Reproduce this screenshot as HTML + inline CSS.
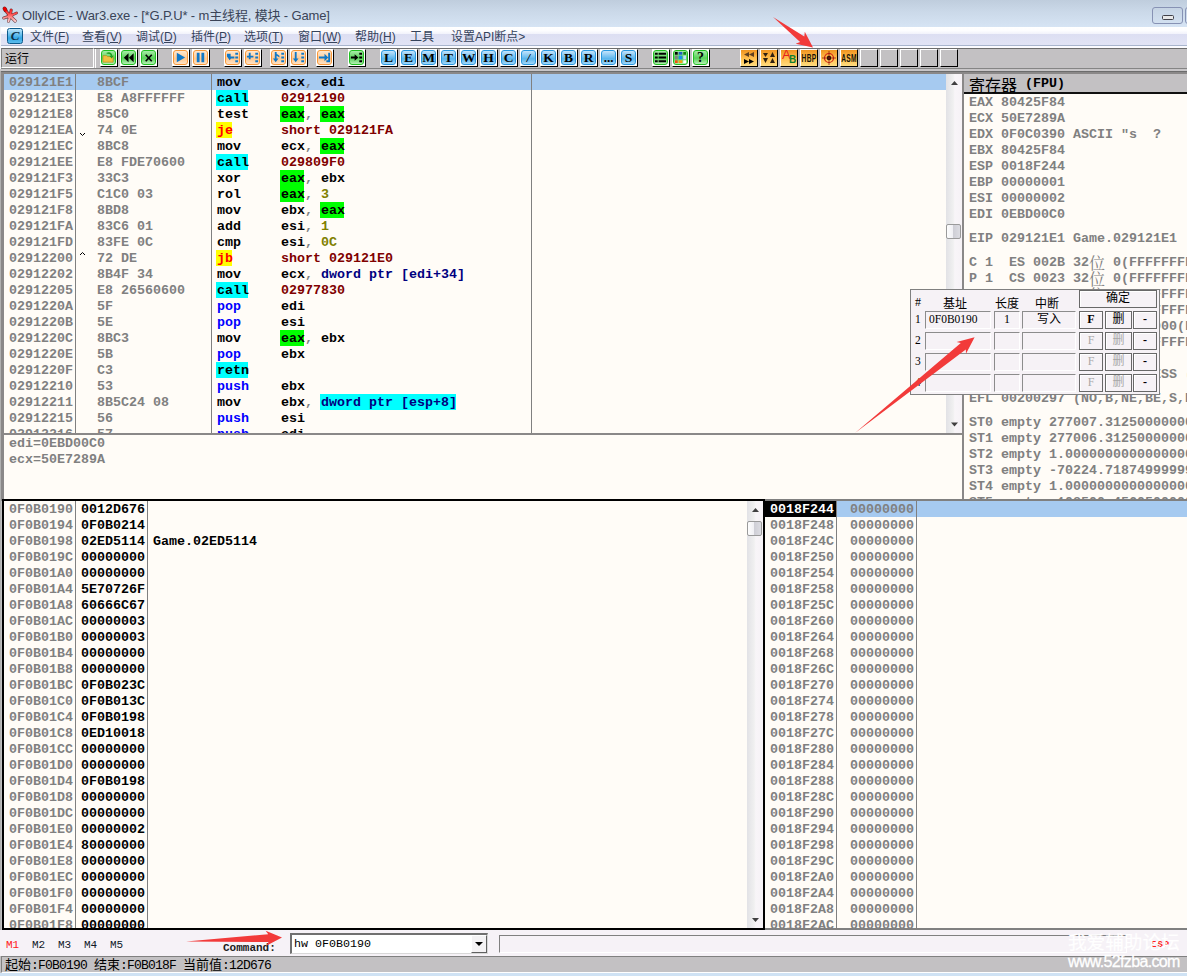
<!DOCTYPE html><html><head><meta charset="utf-8"><title>OllyICE - War3.exe</title><style>
*{margin:0;padding:0;box-sizing:border-box}
html,body{width:1187px;height:976px;overflow:hidden;background:#c0c0c0}
body{position:relative;font-family:"Liberation Sans","Noto Sans CJK SC",sans-serif}
.a{position:absolute}
.m{font-family:"Liberation Mono","Noto Sans CJK SC",monospace;font-weight:bold;font-size:13.333px;line-height:16px;white-space:pre;letter-spacing:0}
.r{position:absolute;left:0;height:16px;white-space:pre;margin-left:1px}
.r>span,.r{line-height:18px}
.r span{display:inline-block;height:16px;vertical-align:top}
.g{color:#808080}
.k{color:#000}
.cy,.gr,.ye{margin-left:-1px;padding-left:1px}
.cy{background:linear-gradient(#0ff,#0ff) 0 0/calc(100% - 1px) 100% no-repeat;color:#000}
.gr{background:linear-gradient(#0f0,#0f0) 0 0/calc(100% - 1px) 100% no-repeat;color:#000}
.ye{background:linear-gradient(#ff0,#ff0) 0 0/calc(100% - 1px) 100% no-repeat;color:#ff0000}
.bl{color:#0000ff}
.dr{color:#800000}
.nv{color:#000080}
.ol{color:#808000}
.cj{font-family:"Noto Sans CJK SC",sans-serif;font-weight:normal;font-size:16px;color:#000}
.pane{position:absolute;background:#fffcf7;overflow:hidden}
.vl{position:absolute;width:1px;background:#808080;top:0;bottom:0}
.tb{position:absolute;top:49px;width:18px;height:18px;border-top:1px solid #fff;border-left:1px solid #fff;border-right:1px solid #000;border-bottom:1px solid #000;background:#c3c1c3}
.tg,.to,.tl{background:#fff}
.tb i{position:absolute;left:0;top:0;width:15px;height:15px;display:block;border-radius:3px;font-style:normal}
.tg i{border:1px solid #20c020;background:linear-gradient(#a8eca8,#58d058 55%,#b4f0b4)}
.to i{border:1px solid #f89838;background:linear-gradient(#ffe8d0,#ffc890 60%,#ffe4c8)}
.tl i{border:1px solid #2898e0;background:linear-gradient(#c4e4fc,#58b4ec 60%,#a4d8f8);font-family:"Liberation Serif",serif;font-weight:bold;font-size:13.500px;line-height:13px;text-align:center;color:#000}
.tp i{border-radius:0;left:0;top:0;width:16px;height:16px;background:linear-gradient(#f09420,#ffc050 55%,#ffdc80)}
.menu{position:absolute;top:29px;height:16px;font-size:12px;line-height:16px;color:#35435c;white-space:pre;font-family:"Liberation Sans","Noto Sans CJK SC",sans-serif}
.menu u{text-decoration:underline}
.sb{position:absolute;background:linear-gradient(90deg,#e2e2e6,#f0f0f0 45%,#f8f5f8 55%,#f6f2f6)}
.th{position:absolute;left:0;width:15px;border:1px solid #9a9a9a;border-radius:2px;background:linear-gradient(90deg,#fdfdfd,#f0f0f4 45%,#cfcfd6 50%,#dcdce2)}
.dlg{position:absolute;left:910px;top:289px;width:250px;height:106px;background:#f6f2f6;border:1px solid #808080;border-right-color:#808080;font-family:"Liberation Serif","Noto Sans CJK SC",serif;font-size:12px;color:#000}
.in{position:absolute;height:18px;border-top:1px solid #8c8c8c;border-left:1px solid #8c8c8c;border-right:1px solid #fff;border-bottom:1px solid #fff;background:#f6f2f6;font-size:12px;line-height:15px;text-align:center;white-space:pre}
.bt{position:absolute;height:18px;border:1px solid #686868;box-shadow:inset 1px 1px 0 #fff;background:#f6f2f6;font-size:12px;line-height:15px;text-align:center}
.dis{color:#a8a8a8}
.sc{font-family:'Noto Sans CJK SC',sans-serif;font-size:13px;letter-spacing:0}
</style></head><body>
<div class="a" style="left:0;top:0;width:1187px;height:27px;background:linear-gradient(#bfcddd,#cad8e8 40%,#d6e4f4)"></div>
<svg class="a" style="left:1px;top:6px" width="19" height="18" viewBox="1 6 19 18"><defs><linearGradient id="sg" x1="0" y1="7" x2="0" y2="23" gradientUnits="userSpaceOnUse"><stop offset="0" stop-color="#f00000"/><stop offset=".45" stop-color="#ff5050"/><stop offset="1" stop-color="#fff0f0"/></linearGradient></defs><g fill="none" stroke-linecap="round"><g stroke="#5a1010" stroke-opacity=".75"><path d="M10 16L6 11" stroke-width="3.400"/><ellipse cx="5" cy="9.300" rx="1.500" ry="2.300" transform="rotate(-28 5 9.300)" fill="#5a1010" stroke-width="1.200"/><path d="M10 16L11.200 10" stroke-width="3.200"/><path d="M10 16L16.500 13" stroke-width="3"/><path d="M10 16L3.700 18" stroke-width="3"/><path d="M10 16L8.500 21.300" stroke-width="3"/><path d="M10 16L15.200 21" stroke-width="3.200"/><circle cx="10" cy="16" r="2.600" stroke-width="1.200"/></g><g stroke="url(#sg)"><path d="M10 16L6 11" stroke-width="2"/><ellipse cx="5" cy="9.300" rx="1.500" ry="2.300" transform="rotate(-28 5 9.300)" fill="#f00000" stroke="#f00000" stroke-width=".2"/><path d="M10 16L11.200 10" stroke-width="2"/><path d="M10 16L16.500 13" stroke-width="1.800"/><path d="M10 16L3.700 18" stroke-width="1.800"/><path d="M10 16L8.500 21.300" stroke-width="1.800"/><path d="M10 16L15.200 21" stroke-width="2"/><circle cx="10" cy="16" r="2.400" fill="url(#sg)" stroke-width=".4"/></g></g></svg>
<div class="a" style="left:22px;top:7px;font-size:13px;line-height:18px;color:#3a4458;white-space:pre;letter-spacing:-0.15px;font-family:'Liberation Sans','Noto Sans CJK SC',sans-serif">OllyICE - War3.exe - [*G.P.U* - m主线程, 模块 - Game]</div>
<div class="a" style="left:1152px;top:7px;width:31px;height:17px;border:1px solid #8792b4;border-radius:3px;background:linear-gradient(#c6d4e4,#d2e0f0)"></div>
<div class="a" style="left:1162px;top:15px;width:12px;height:5px;border:1px solid #404048;border-radius:1.5px;background:#e8e8e8"></div>
<div class="a" style="left:1185px;top:7px;width:10px;height:17px;border:1px solid #8792b4;border-radius:3px"></div>
<div class="a" style="left:0;top:27px;width:1187px;height:7px;background:linear-gradient(#fff,#fdfdff 50%,#f1f2fb)"></div>
<div class="a" style="left:0;top:34px;width:1187px;height:11px;background:linear-gradient(#dcdef2,#e2e4f5)"></div>
<div class="a" style="left:0;top:45px;width:1187px;height:1px;background:#a9b5cd"></div>
<div class="a" style="left:0;top:46px;width:1187px;height:2px;background:#fbfbff"></div>
<div class="a" style="left:7px;top:28px;width:16px;height:16px;border:1px solid #0c5a8c;border-radius:2.500px;background:linear-gradient(#bfe6fa,#34a8e6 65%,#5cbcec);font-family:'Liberation Serif',serif;font-weight:bold;font-style:italic;font-size:13px;line-height:14px;text-align:center;color:#0c3048">C</div>
<div class="menu" style="left:30px">文件(<u>F</u>)</div>
<div class="menu" style="left:82px">查看(<u>V</u>)</div>
<div class="menu" style="left:136px">调试(<u>D</u>)</div>
<div class="menu" style="left:191px">插件(<u>P</u>)</div>
<div class="menu" style="left:244px">选项(<u>T</u>)</div>
<div class="menu" style="left:298px">窗口(<u>W</u>)</div>
<div class="menu" style="left:355px">帮助(<u>H</u>)</div>
<div class="menu" style="left:410px">工具</div>
<div class="menu" style="left:451px">设置API断点></div>
<div class="a" style="left:0;top:48px;width:1187px;height:1px;background:#6c6c6c"></div>
<div class="a" style="left:0;top:49px;width:1187px;height:19px;background:#c3c1c3"></div>
<div class="a" style="left:0;top:68px;width:1187px;height:1px;background:#858585"></div>
<div class="a" style="left:0;top:69px;width:1187px;height:2px;background:#c8c6c8"></div>
<div class="a" style="left:0;top:27px;width:1px;height:42px;background:#f4f4f8"></div>
<div class="a" style="left:1px;top:48px;width:93px;height:20px;border-top:1px solid #6c6c6c;border-left:1px solid #808080;border-right:1px solid #fff;border-bottom:1px solid #fff;background:#c3c1c3"></div>
<div class="a" style="left:5px;top:50px;font-size:12px;line-height:16px;color:#000;font-family:'Noto Sans CJK SC',sans-serif">运行</div>
<div class="a" style="left:95px;top:49px;width:1px;height:19px;background:#fff"></div>
<div class="tb tg" style="left:100px"><i><svg width="13" height="13" viewBox="0 0 14 14" style="position:absolute;left:0;top:0"><path d="M1 5h4l1 1h6v6H1z" fill="#f0c040" stroke="#b08010" stroke-width=".6"/><path d="M5 2c3-1.5 6 0 6 3l1.6-.2L10.5 8 8 5.300l1.500-.1C9.300 3.500 7.500 2.400 5 3z" fill="#20a020"/></svg></i></div>
<div class="tb tg" style="left:120px"><i><svg width="13" height="13" viewBox="0 0 14 14" style="position:absolute;left:0;top:0"><path d="M7 2.500v9.500L2 7.200zM12.500 2.500v9.500L7.500 7.200z" fill="#000"/></svg></i></div>
<div class="tb tg" style="left:140px"><i><svg width="13" height="13" viewBox="0 0 14 14" style="position:absolute;left:0;top:0"><path d="M4 4l6.500 7M10.500 4l-6.500 7" stroke="#000" stroke-width="1.800"/></svg></i></div>
<div class="tb to" style="left:172px"><i><svg width="13" height="13" viewBox="0 0 14 14" style="position:absolute;left:0;top:0"><path d="M3 2l9 5-9 5z" fill="#1078c8"/></svg></i></div>
<div class="tb to" style="left:192px"><i><svg width="13" height="13" viewBox="0 0 14 14" style="position:absolute;left:0;top:0"><path d="M3 2h3v10H3zM8 2h3v10H8z" fill="#1078c8"/></svg></i></div>
<div class="tb to" style="left:224px"><i><svg width="13" height="13" viewBox="0 0 14 14" style="position:absolute;left:0;top:0"><path d="M10 2h3v2h-3zM10 6h3v2h-3zM10 10h3v2h-3z" fill="#1078c8"/><path d="M1 3h4v3h2l-3 4-3-4h0z M5 6h4v2H5z" fill="#1078c8"/></svg></i></div>
<div class="tb to" style="left:244px"><i><svg width="13" height="13" viewBox="0 0 14 14" style="position:absolute;left:0;top:0"><path d="M10 2h3v2h-3zM10 6h3v2h-3zM10 10h3v2h-3z" fill="#1078c8"/><path d="M3 2h2v3h3v2H5v0H3V7H1V5h2z M3 7h2v2H3z" fill="#1078c8"/></svg></i></div>
<div class="tb to" style="left:270px"><i><svg width="13" height="13" viewBox="0 0 14 14" style="position:absolute;left:0;top:0"><path d="M10 2h3v2h-3zM10 6h3v2h-3zM10 10h3v2h-3z" fill="#1078c8"/><path d="M3 1h2v7h2l-3 4-3-4h2z M5 3l3 2v2L5 5z" fill="#1078c8"/></svg></i></div>
<div class="tb to" style="left:290px"><i><svg width="13" height="13" viewBox="0 0 14 14" style="position:absolute;left:0;top:0"><path d="M10 2h3v2h-3zM10 6h3v2h-3zM10 10h3v2h-3z" fill="#1078c8"/><path d="M3 1h2v7h2l-3 4-3-4h2z" fill="#1078c8"/></svg></i></div>
<div class="tb to" style="left:316px"><i><svg width="13" height="13" viewBox="0 0 14 14" style="position:absolute;left:0;top:0"><path d="M1 6h6V3l4 4-4 4V8H1z M11 2h2v10H9v-2h2z" fill="#1078c8"/></svg></i></div>
<div class="tb tg" style="left:348px"><i><svg width="13" height="13" viewBox="0 0 14 14" style="position:absolute;left:0;top:0"><path d="M10 2h3v2h-3zM10 6h3v2h-3zM10 10h3v2h-3z" fill="#000"/><path d="M1 6h4V3.500l4 3.500-4 3.500V8H1z" fill="#000"/></svg></i></div>
<div class="tb tl" style="left:380px"><i>L</i></div>
<div class="tb tl" style="left:400px"><i>E</i></div>
<div class="tb tl" style="left:420px"><i>M</i></div>
<div class="tb tl" style="left:440px"><i>T</i></div>
<div class="tb tl" style="left:460px"><i>W</i></div>
<div class="tb tl" style="left:480px"><i>H</i></div>
<div class="tb tl" style="left:500px"><i>C</i></div>
<div class="tb tl" style="left:520px"><i><span style="font-size:12px;font-style:italic">/</span></i></div>
<div class="tb tl" style="left:540px"><i>K</i></div>
<div class="tb tl" style="left:560px"><i>B</i></div>
<div class="tb tl" style="left:580px"><i>R</i></div>
<div class="tb tl" style="left:600px"><i><span style="font-size:13px;letter-spacing:0;position:relative;top:0px">...</span></i></div>
<div class="tb tl" style="left:620px"><i>S</i></div>
<div class="tb tg" style="left:652px"><i><svg width="13" height="13" viewBox="0 0 14 14" style="position:absolute;left:0;top:0"><path d="M1 2h3v2H1zM1 6h3v2H1zM1 10h3v2H1zM5 2h8v2H5zM5 6h8v2H5zM5 10h8v2H5z" fill="#000"/></svg></i></div>
<div class="tb tg" style="left:672px"><i><svg width="13" height="13" viewBox="0 0 14 14" style="position:absolute;left:0;top:0"><path d="M1 1h3v3H1z" fill="#000"/><path d="M5 1h4v3H5z" fill="#2060c0"/><path d="M10 1h3v3h-3z" fill="#108010"/><path d="M1 5h3v4H1z" fill="#808080"/><path d="M5 5h4v4H5z" fill="#1890e8"/><path d="M10 5h3v4h-3z" fill="#c0e0ff"/><path d="M1 10h3v3H1z" fill="#f05010"/><path d="M5 10h4v3H5z" fill="#f0a010"/><path d="M10 10h3v3h-3z" fill="#fff"/></svg></i></div>
<div class="tb tg" style="left:692px"><i><span style="font-family:'Liberation Serif',serif;font-weight:bold;font-size:14px;line-height:14px;display:block;text-align:center;color:#000">?</span></i></div>
<div class="tb tp" style="left:740px"><i><svg width="14" height="14" viewBox="0 0 14 14" style="position:absolute;left:1px;top:1px"><path d="M7 1v5L2 3.500zM12 1v5L7 3.500z" fill="#604020"/><path d="M2 8v5l5-2.500zM7 8v5l5-2.500z" fill="#000"/></svg></i></div>
<div class="tb tp" style="left:760px"><i><svg width="14" height="14" viewBox="0 0 14 14" style="position:absolute;left:1px;top:1px"><path d="M1 2h5L3.500 6zM1 7h5l-2.500 5z" fill="#302010"/><path d="M8 6h5L10.500 1zM8 12h5l-2.500-5z" fill="#302010"/></svg></i></div>
<div class="tb tp" style="left:780px"><i><span style="position:absolute;left:1px;top:-2px;font:13px/14px 'Liberation Sans',sans-serif;color:#e82020">A</span><span style="position:absolute;left:8px;top:4px;font:bold 10px/12px 'Liberation Sans',sans-serif;color:#108030">B</span></i></div>
<div class="tb tp" style="left:800px"><i><span style="position:absolute;left:-6px;top:2px;width:28px;text-align:center;font:bold 11px/12px 'Liberation Sans',sans-serif;color:#1a1408;letter-spacing:0.5px;transform:scaleX(.6)">HBP</span></i></div>
<div class="tb tp" style="left:820px"><i><svg width="14" height="14" viewBox="0 0 14 14" style="position:absolute;left:1px;top:1px"><circle cx="7" cy="7" r="4.500" fill="none" stroke="#d02010" stroke-width="1.200"/><circle cx="7" cy="7" r="2.200" fill="#000"/><path d="M7 0v14M0 7h14" stroke="#902010" stroke-width=".8"/></svg></i></div>
<div class="tb tp" style="left:840px"><i><span style="position:absolute;left:-6px;top:2px;width:28px;text-align:center;font:bold 11px/12px 'Liberation Sans',sans-serif;color:#1a1408;letter-spacing:0.5px;transform:scaleX(.6)">ASM</span></i></div>
<div class="tb" style="left:860px"></div>
<div class="tb" style="left:880px"></div>
<div class="tb" style="left:900px"></div>
<div class="tb" style="left:920px"></div>
<div class="tb" style="left:940px"></div>
<div class="a" style="left:0;top:71px;width:1187px;height:430px;background:#8a8888"></div>
<div class="a" style="left:0;top:71px;width:1187px;height:1px;background:#6c6c6c"></div>
<div class="a" style="left:0;top:71px;width:1px;height:859px;background:#b0b0b0"></div>
<div class="pane m" style="left:4px;top:74px;width:942px;height:359px">
<div class="a" style="left:0;top:0;width:942px;height:16px;background:#a6caf0"></div>
<div class="r g" style="left:4px;top:0px">029121E1</div>
<div class="r g" style="left:92px;top:0px">8BCF</div>
<div class="r" style="left:212px;top:0px"><span class="k">mov     ecx</span><span class="g">, </span><span class="k">edi</span></div>
<div class="r g" style="left:4px;top:16px">029121E3</div>
<div class="r g" style="left:92px;top:16px">E8 A8FFFFFF</div>
<div class="r" style="left:212px;top:16px"><span class="cy">call</span><span class="k">    </span><span class="dr">02912190</span></div>
<div class="r g" style="left:4px;top:32px">029121E8</div>
<div class="r g" style="left:92px;top:32px">85C0</div>
<div class="r" style="left:212px;top:32px"><span class="k">test    </span><span class="gr">eax</span><span class="g">, </span><span class="gr">eax</span></div>
<div class="r g" style="left:4px;top:48px">029121EA</div>
<svg class="a" style="left:75px;top:58px" width="8" height="5"><path d="M1 1l2.500 2.500L6 1" fill="none" stroke="#000" stroke-width="1"/></svg>
<div class="r g" style="left:92px;top:48px">74 0E</div>
<div class="r" style="left:212px;top:48px"><span class="ye">je</span><span class="k">      </span><span class="dr">short 029121FA</span></div>
<div class="r g" style="left:4px;top:64px">029121EC</div>
<div class="r g" style="left:92px;top:64px">8BC8</div>
<div class="r" style="left:212px;top:64px"><span class="k">mov     ecx</span><span class="g">, </span><span class="gr">eax</span></div>
<div class="r g" style="left:4px;top:80px">029121EE</div>
<div class="r g" style="left:92px;top:80px">E8 FDE70600</div>
<div class="r" style="left:212px;top:80px"><span class="cy">call</span><span class="k">    </span><span class="dr">029809F0</span></div>
<div class="r g" style="left:4px;top:96px">029121F3</div>
<div class="r g" style="left:92px;top:96px">33C3</div>
<div class="r" style="left:212px;top:96px"><span class="k">xor     </span><span class="gr">eax</span><span class="g">, </span><span class="k">ebx</span></div>
<div class="r g" style="left:4px;top:112px">029121F5</div>
<div class="r g" style="left:92px;top:112px">C1C0 03</div>
<div class="r" style="left:212px;top:112px"><span class="k">rol     </span><span class="gr">eax</span><span class="g">, </span><span class="ol">3</span></div>
<div class="r g" style="left:4px;top:128px">029121F8</div>
<div class="r g" style="left:92px;top:128px">8BD8</div>
<div class="r" style="left:212px;top:128px"><span class="k">mov     ebx</span><span class="g">, </span><span class="gr">eax</span></div>
<div class="r g" style="left:4px;top:144px">029121FA</div>
<div class="r g" style="left:92px;top:144px">83C6 01</div>
<div class="r" style="left:212px;top:144px"><span class="k">add     esi</span><span class="g">, </span><span class="ol">1</span></div>
<div class="r g" style="left:4px;top:160px">029121FD</div>
<div class="r g" style="left:92px;top:160px">83FE 0C</div>
<div class="r" style="left:212px;top:160px"><span class="k">cmp     esi</span><span class="g">, </span><span class="ol">0C</span></div>
<div class="r g" style="left:4px;top:176px">02912200</div>
<svg class="a" style="left:75px;top:177px" width="8" height="5"><path d="M1 4l2.500-2.500L6 4" fill="none" stroke="#000" stroke-width="1"/></svg>
<div class="r g" style="left:92px;top:176px">72 DE</div>
<div class="r" style="left:212px;top:176px"><span class="ye">jb</span><span class="k">      </span><span class="dr">short 029121E0</span></div>
<div class="r g" style="left:4px;top:192px">02912202</div>
<div class="r g" style="left:92px;top:192px">8B4F 34</div>
<div class="r" style="left:212px;top:192px"><span class="k">mov     ecx</span><span class="g">, </span><span class="nv">dword ptr [edi+34]</span></div>
<div class="r g" style="left:4px;top:208px">02912205</div>
<div class="r g" style="left:92px;top:208px">E8 26560600</div>
<div class="r" style="left:212px;top:208px"><span class="cy">call</span><span class="k">    </span><span class="dr">02977830</span></div>
<div class="r g" style="left:4px;top:224px">0291220A</div>
<div class="r g" style="left:92px;top:224px">5F</div>
<div class="r" style="left:212px;top:224px"><span class="bl">pop</span><span class="k">     edi</span></div>
<div class="r g" style="left:4px;top:240px">0291220B</div>
<div class="r g" style="left:92px;top:240px">5E</div>
<div class="r" style="left:212px;top:240px"><span class="bl">pop</span><span class="k">     esi</span></div>
<div class="r g" style="left:4px;top:256px">0291220C</div>
<div class="r g" style="left:92px;top:256px">8BC3</div>
<div class="r" style="left:212px;top:256px"><span class="k">mov     </span><span class="gr">eax</span><span class="g">, </span><span class="k">ebx</span></div>
<div class="r g" style="left:4px;top:272px">0291220E</div>
<div class="r g" style="left:92px;top:272px">5B</div>
<div class="r" style="left:212px;top:272px"><span class="bl">pop</span><span class="k">     ebx</span></div>
<div class="r g" style="left:4px;top:288px">0291220F</div>
<div class="r g" style="left:92px;top:288px">C3</div>
<div class="r" style="left:212px;top:288px"><span class="cy">retn</span></div>
<div class="r g" style="left:4px;top:304px">02912210</div>
<div class="r g" style="left:92px;top:304px">53</div>
<div class="r" style="left:212px;top:304px"><span class="bl">push</span><span class="k">    ebx</span></div>
<div class="r g" style="left:4px;top:320px">02912211</div>
<div class="r g" style="left:92px;top:320px">8B5C24 08</div>
<div class="r" style="left:212px;top:320px"><span class="k">mov     ebx</span><span class="g">, </span><span class="cy nv">dword ptr [esp+8]</span></div>
<div class="r g" style="left:4px;top:336px">02912215</div>
<div class="r g" style="left:92px;top:336px">56</div>
<div class="r" style="left:212px;top:336px"><span class="bl">push</span><span class="k">    esi</span></div>
<div class="r g" style="left:4px;top:352px">02912216</div>
<div class="r g" style="left:92px;top:352px">57</div>
<div class="r" style="left:212px;top:352px"><span class="bl">push</span><span class="k">    edi</span></div>
<div class="vl" style="left:71px"></div>
<div class="vl" style="left:207px"></div>
<div class="vl" style="left:527px"></div>
</div>
<div class="sb" style="left:946px;top:74px;width:16px;height:359px"></div>
<svg class="a" style="left:946px;top:74px" width="16" height="359"><path d="M5 11l3.500-4 3.500 4z" fill="#404040"/><path d="M5 348.500l3.500 4 3.500-4z" fill="#404040"/></svg>
<div class="th" style="left:946px;top:224px;height:15px"></div>
<div class="pane m g" style="left:4px;top:435px;width:958px;height:64px">
<div class="r" style="left:4px;top:0">edi=0EBD00C0</div><div class="r" style="left:4px;top:16px">ecx=50E7289A</div>
</div>
<div class="pane m g" style="left:964px;top:74px;width:223px;height:425px">
<div class="a" style="left:0;top:0;width:223px;height:18px;background:#c3c1c3"></div>
<div class="a" style="left:0;top:18px;width:223px;height:2px;background:#101010"></div>
<div class="r k" style="left:4px;top:1px"><span class="cj">寄存器</span> (FPU)</div>
<div class="r" style="left:4px;top:20px">EAX 80425F84</div>
<div class="r" style="left:4px;top:36px">ECX 50E7289A</div>
<div class="r" style="left:4px;top:52px">EDX 0F0C0390 ASCII "s  ?</div>
<div class="r" style="left:4px;top:68px">EBX 80425F84</div>
<div class="r" style="left:4px;top:84px">ESP 0018F244</div>
<div class="r" style="left:4px;top:100px">EBP 00000001</div>
<div class="r" style="left:4px;top:116px">ESI 00000002</div>
<div class="r" style="left:4px;top:132px">EDI 0EBD00C0</div>
<div class="r" style="left:4px;top:156px">EIP 029121E1 Game.029121E1</div>
<div class="r" style="left:4px;top:180px">C 1  ES 002B 32<span class="cj" style="color:#808080;font-family:'Noto Serif CJK SC',serif">位</span> 0(FFFFFFFF)</div>
<div class="r" style="left:4px;top:196px">P 1  CS 0023 32<span class="cj" style="color:#808080;font-family:'Noto Serif CJK SC',serif">位</span> 0(FFFFFFFF)</div>
<div class="r" style="left:4px;top:212px">A 0  SS 002B 32<span class="cj" style="color:#808080;font-family:'Noto Serif CJK SC',serif">位</span> 0(FFFFFFFF)</div>
<div class="r" style="left:4px;top:228px">Z 0  DS 002B 32<span class="cj" style="color:#808080;font-family:'Noto Serif CJK SC',serif">位</span> 0(FFFFFFFF)</div>
<div class="r" style="left:4px;top:244px">S 1  FS 0053 32<span class="cj" style="color:#808080;font-family:'Noto Serif CJK SC',serif">位</span> 7EFDD000(FFF)</div>
<div class="r" style="left:4px;top:260px">T 0  GS 002B 32<span class="cj" style="color:#808080;font-family:'Noto Serif CJK SC',serif">位</span> 0(FFFFFFFF)</div>
<div class="r" style="left:4px;top:276px">D 0</div>
<div class="r" style="left:4px;top:292px">O 0  LastErr ERROR_SUCCESS (00000000)</div>
<div class="r" style="left:4px;top:316px">EFL 00200297 (NO,B,NE,BE,S,PE,L,LE)</div>
<div class="r" style="left:4px;top:340px">ST0 empty 277007.31250000000</div>
<div class="r" style="left:4px;top:356px">ST1 empty 277006.31250000000</div>
<div class="r" style="left:4px;top:372px">ST2 empty 1.0000000000000000000</div>
<div class="r" style="left:4px;top:388px">ST3 empty -70224.718749999990</div>
<div class="r" style="left:4px;top:404px">ST4 empty 1.0000000000000000000</div>
<div class="r" style="left:4px;top:420px">ST5 empty -108500.45605000000</div>
</div>
<div class="a" style="left:2px;top:499px;width:763px;height:431px;background:#000"></div>
<div class="pane m" style="left:4px;top:501px;width:743px;height:427px">
<div class="r g" style="left:4px;top:0px">0F0B0190</div>
<div class="r k" style="left:76px;top:0px">0012D676</div>
<div class="r g" style="left:4px;top:16px">0F0B0194</div>
<div class="r k" style="left:76px;top:16px">0F0B0214</div>
<div class="r g" style="left:4px;top:32px">0F0B0198</div>
<div class="r k" style="left:76px;top:32px">02ED5114</div>
<div class="r k" style="left:148px;top:32px">Game.02ED5114</div>
<div class="r g" style="left:4px;top:48px">0F0B019C</div>
<div class="r k" style="left:76px;top:48px">00000000</div>
<div class="r g" style="left:4px;top:64px">0F0B01A0</div>
<div class="r k" style="left:76px;top:64px">00000000</div>
<div class="r g" style="left:4px;top:80px">0F0B01A4</div>
<div class="r k" style="left:76px;top:80px">5E70726F</div>
<div class="r g" style="left:4px;top:96px">0F0B01A8</div>
<div class="r k" style="left:76px;top:96px">60666C67</div>
<div class="r g" style="left:4px;top:112px">0F0B01AC</div>
<div class="r k" style="left:76px;top:112px">00000003</div>
<div class="r g" style="left:4px;top:128px">0F0B01B0</div>
<div class="r k" style="left:76px;top:128px">00000003</div>
<div class="r g" style="left:4px;top:144px">0F0B01B4</div>
<div class="r k" style="left:76px;top:144px">00000000</div>
<div class="r g" style="left:4px;top:160px">0F0B01B8</div>
<div class="r k" style="left:76px;top:160px">00000000</div>
<div class="r g" style="left:4px;top:176px">0F0B01BC</div>
<div class="r k" style="left:76px;top:176px">0F0B023C</div>
<div class="r g" style="left:4px;top:192px">0F0B01C0</div>
<div class="r k" style="left:76px;top:192px">0F0B013C</div>
<div class="r g" style="left:4px;top:208px">0F0B01C4</div>
<div class="r k" style="left:76px;top:208px">0F0B0198</div>
<div class="r g" style="left:4px;top:224px">0F0B01C8</div>
<div class="r k" style="left:76px;top:224px">0ED10018</div>
<div class="r g" style="left:4px;top:240px">0F0B01CC</div>
<div class="r k" style="left:76px;top:240px">00000000</div>
<div class="r g" style="left:4px;top:256px">0F0B01D0</div>
<div class="r k" style="left:76px;top:256px">00000000</div>
<div class="r g" style="left:4px;top:272px">0F0B01D4</div>
<div class="r k" style="left:76px;top:272px">0F0B0198</div>
<div class="r g" style="left:4px;top:288px">0F0B01D8</div>
<div class="r k" style="left:76px;top:288px">00000000</div>
<div class="r g" style="left:4px;top:304px">0F0B01DC</div>
<div class="r k" style="left:76px;top:304px">00000000</div>
<div class="r g" style="left:4px;top:320px">0F0B01E0</div>
<div class="r k" style="left:76px;top:320px">00000002</div>
<div class="r g" style="left:4px;top:336px">0F0B01E4</div>
<div class="r k" style="left:76px;top:336px">80000000</div>
<div class="r g" style="left:4px;top:352px">0F0B01E8</div>
<div class="r k" style="left:76px;top:352px">00000000</div>
<div class="r g" style="left:4px;top:368px">0F0B01EC</div>
<div class="r k" style="left:76px;top:368px">00000000</div>
<div class="r g" style="left:4px;top:384px">0F0B01F0</div>
<div class="r k" style="left:76px;top:384px">00000000</div>
<div class="r g" style="left:4px;top:400px">0F0B01F4</div>
<div class="r k" style="left:76px;top:400px">00000000</div>
<div class="r g" style="left:4px;top:416px">0F0B01F8</div>
<div class="r k" style="left:76px;top:416px">00000000</div>
<div class="vl" style="left:71px"></div>
<div class="vl" style="left:143px"></div>
</div>
<div class="sb" style="left:747px;top:501px;width:16px;height:427px"></div>
<svg class="a" style="left:747px;top:501px" width="16" height="427"><path d="M5 11l3.500-4 3.500 4z" fill="#404040"/><path d="M5 417l3.500 4 3.500-4z" fill="#404040"/></svg>
<div class="th" style="left:747px;top:521px;height:15px"></div>
<div class="a" style="left:765px;top:499px;width:422px;height:432px;background:#808080"></div>
<div class="pane m g" style="left:765px;top:501px;width:422px;height:427px">
<div class="a" style="left:0;top:0;width:422px;height:16px;background:#a6caf0"></div>
<div class="a" style="left:0;top:0;width:71px;height:16px;background:#000"></div>
<div class="r" style="left:4px;top:0px;color:#fff">0018F244</div>
<div class="r" style="left:84px;top:0px">00000000</div>
<div class="r" style="left:4px;top:16px">0018F248</div>
<div class="r" style="left:84px;top:16px">00000000</div>
<div class="r" style="left:4px;top:32px">0018F24C</div>
<div class="r" style="left:84px;top:32px">00000000</div>
<div class="r" style="left:4px;top:48px">0018F250</div>
<div class="r" style="left:84px;top:48px">00000000</div>
<div class="r" style="left:4px;top:64px">0018F254</div>
<div class="r" style="left:84px;top:64px">00000000</div>
<div class="r" style="left:4px;top:80px">0018F258</div>
<div class="r" style="left:84px;top:80px">00000000</div>
<div class="r" style="left:4px;top:96px">0018F25C</div>
<div class="r" style="left:84px;top:96px">00000000</div>
<div class="r" style="left:4px;top:112px">0018F260</div>
<div class="r" style="left:84px;top:112px">00000000</div>
<div class="r" style="left:4px;top:128px">0018F264</div>
<div class="r" style="left:84px;top:128px">00000000</div>
<div class="r" style="left:4px;top:144px">0018F268</div>
<div class="r" style="left:84px;top:144px">00000000</div>
<div class="r" style="left:4px;top:160px">0018F26C</div>
<div class="r" style="left:84px;top:160px">00000000</div>
<div class="r" style="left:4px;top:176px">0018F270</div>
<div class="r" style="left:84px;top:176px">00000000</div>
<div class="r" style="left:4px;top:192px">0018F274</div>
<div class="r" style="left:84px;top:192px">00000000</div>
<div class="r" style="left:4px;top:208px">0018F278</div>
<div class="r" style="left:84px;top:208px">00000000</div>
<div class="r" style="left:4px;top:224px">0018F27C</div>
<div class="r" style="left:84px;top:224px">00000000</div>
<div class="r" style="left:4px;top:240px">0018F280</div>
<div class="r" style="left:84px;top:240px">00000000</div>
<div class="r" style="left:4px;top:256px">0018F284</div>
<div class="r" style="left:84px;top:256px">00000000</div>
<div class="r" style="left:4px;top:272px">0018F288</div>
<div class="r" style="left:84px;top:272px">00000000</div>
<div class="r" style="left:4px;top:288px">0018F28C</div>
<div class="r" style="left:84px;top:288px">00000000</div>
<div class="r" style="left:4px;top:304px">0018F290</div>
<div class="r" style="left:84px;top:304px">00000000</div>
<div class="r" style="left:4px;top:320px">0018F294</div>
<div class="r" style="left:84px;top:320px">00000000</div>
<div class="r" style="left:4px;top:336px">0018F298</div>
<div class="r" style="left:84px;top:336px">00000000</div>
<div class="r" style="left:4px;top:352px">0018F29C</div>
<div class="r" style="left:84px;top:352px">00000000</div>
<div class="r" style="left:4px;top:368px">0018F2A0</div>
<div class="r" style="left:84px;top:368px">00000000</div>
<div class="r" style="left:4px;top:384px">0018F2A4</div>
<div class="r" style="left:84px;top:384px">00000000</div>
<div class="r" style="left:4px;top:400px">0018F2A8</div>
<div class="r" style="left:84px;top:400px">00000000</div>
<div class="r" style="left:4px;top:416px">0018F2AC</div>
<div class="r" style="left:84px;top:416px">00000000</div>
<div class="vl" style="left:71px"></div>
<div class="vl" style="left:151px"></div>
</div>
<div class="a" style="left:0;top:930px;width:1187px;height:26px;background:#f6f2f7"></div>
<div class="a" style="left:6px;top:938px;font-family:'Liberation Mono',monospace;font-size:11px;line-height:14px;white-space:pre;color:#ff2020">M1</div>
<div class="a" style="left:32px;top:938px;font-family:'Liberation Mono',monospace;font-size:11px;line-height:14px;white-space:pre;color:#101828">M2</div>
<div class="a" style="left:58px;top:938px;font-family:'Liberation Mono',monospace;font-size:11px;line-height:14px;white-space:pre;color:#101828">M3</div>
<div class="a" style="left:84px;top:938px;font-family:'Liberation Mono',monospace;font-size:11px;line-height:14px;white-space:pre;color:#101828">M4</div>
<div class="a" style="left:110px;top:938px;font-family:'Liberation Mono',monospace;font-size:11px;line-height:14px;white-space:pre;color:#101828">M5</div>
<div class="a" style="left:223px;top:941px;font-family:'Liberation Mono',monospace;font-size:11px;line-height:14px;white-space:pre;font-weight:bold;color:#202020">Command:</div>
<div class="a" style="left:290px;top:933px;width:198px;height:21px;background:#fff;border-top:2px solid #707070;border-left:2px solid #707070;border-right:1px solid #d8d8d8;border-bottom:1px solid #d8d8d8"></div>
<div class="a" style="left:294px;top:937px;font-family:'Liberation Mono',monospace;font-size:11.67px;line-height:14px;white-space:pre;color:#000">hw 0F0B0190</div>
<div class="a" style="left:471px;top:935px;width:16px;height:18px;background:#f4f2f4;border-right:1px solid #606060;border-bottom:1px solid #606060;border-left:1px solid #fff;border-top:1px solid #fff"></div>
<svg class="a" style="left:471px;top:935px" width="16" height="18"><path d="M4 7h8l-4 4z" fill="#000"/></svg>
<div class="a" style="left:499px;top:935px;width:628px;height:18px;border-top:1px solid #808080;border-left:1px solid #808080;border-right:1px solid #fff;border-bottom:1px solid #fff;background:#f6f2f7"></div>
<div class="a" style="left:1151px;top:939px;font:bold 9px/12px 'Liberation Mono',monospace;color:#ff2020;letter-spacing:1px">ESP</div>
<div class="a" style="left:0;top:956px;width:1187px;height:17px;background:#c3c1c3"></div>
<div class="a" style="left:1px;top:956px;width:1186px;height:17px;border-top:1px solid #808080;border-left:1px solid #808080;border-bottom:1px solid #fff"></div>
<div class="a" style="left:5px;top:956px;font-family:'Liberation Mono',monospace;font-size:13px;letter-spacing:-0.8px;line-height:15px;white-space:pre;color:#000"><span class="sc">起始</span>:F0B0190 <span class="sc">结束</span>:F0B018F <span class="sc">当前值</span>:12D676</div>
<div class="a" style="left:0;top:973px;width:1187px;height:3px;background:#cfe2f4"></div>
<div class="a" style="left:1068px;top:929px;font-family:'Noto Sans CJK SC',sans-serif;font-size:18.6px;line-height:24px;color:#fff;white-space:pre;-webkit-text-stroke:.2px #fff">我爱辅助论坛</div>
<div class="a" style="left:1068px;top:952px;font-family:'Liberation Sans',sans-serif;font-size:16px;letter-spacing:-0.66px;line-height:20px;color:#fff;-webkit-text-stroke:.3px #fff;white-space:pre">www.52fzba.com</div>
<div class="dlg">
<div class="a" style="left:4px;top:5px">#</div><div class="a" style="left:32px;top:4px">基址</div><div class="a" style="left:84px;top:4px">长度</div><div class="a" style="left:124px;top:4px">中断</div>
<div class="bt" style="left:168px;top:0;width:78px">确定</div>
<div class="a" style="left:4px;top:21px;line-height:16px;font-size:11.500px">1</div>
<div class="in" style="left:14px;top:21px;width:66px;text-align:left;padding-left:3px;font-size:11.500px">0F0B0190</div>
<div class="in" style="left:83px;top:21px;width:26px">1</div>
<div class="in" style="left:111px;top:21px;width:54px">写入</div>
<div class="bt" style="left:168px;top:21px;width:24px;font-weight:bold">F</div>
<div class="bt" style="left:194px;top:21px;width:27px">删</div>
<div class="bt" style="left:222px;top:21px;width:24px;font-weight:bold">-</div>
<div class="a" style="left:4px;top:42px;line-height:16px;font-size:11.500px">2</div>
<div class="in" style="left:14px;top:42px;width:66px;text-align:left;padding-left:3px;font-size:11.500px"></div>
<div class="in" style="left:83px;top:42px;width:26px"></div>
<div class="in" style="left:111px;top:42px;width:54px"></div>
<div class="bt dis" style="left:168px;top:42px;width:24px;">F</div>
<div class="bt dis" style="left:194px;top:42px;width:27px">删</div>
<div class="bt" style="left:222px;top:42px;width:24px;font-weight:bold">-</div>
<div class="a" style="left:4px;top:63px;line-height:16px;font-size:11.500px">3</div>
<div class="in" style="left:14px;top:63px;width:66px;text-align:left;padding-left:3px;font-size:11.500px"></div>
<div class="in" style="left:83px;top:63px;width:26px"></div>
<div class="in" style="left:111px;top:63px;width:54px"></div>
<div class="bt dis" style="left:168px;top:63px;width:24px;">F</div>
<div class="bt dis" style="left:194px;top:63px;width:27px">删</div>
<div class="bt" style="left:222px;top:63px;width:24px;font-weight:bold">-</div>
<div class="a" style="left:4px;top:84px;line-height:16px;font-size:11.500px">4</div>
<div class="in" style="left:14px;top:84px;width:66px;text-align:left;padding-left:3px;font-size:11.500px"></div>
<div class="in" style="left:83px;top:84px;width:26px"></div>
<div class="in" style="left:111px;top:84px;width:54px"></div>
<div class="bt dis" style="left:168px;top:84px;width:24px;">F</div>
<div class="bt dis" style="left:194px;top:84px;width:27px">删</div>
<div class="bt" style="left:222px;top:84px;width:24px;font-weight:bold">-</div>
</div>
<svg class="a" style="left:0;top:0" width="1187" height="976">
<polygon points="773.0,17.0 800.1,42.0 795.7,43.8 813.0,47.5 804.8,31.8 804.3,36.5" fill="#f23a3a"/>
<polygon points="855.0,433.0 965.8,349.4 966.0,353.7 974.6,337.2 956.6,342.0 960.8,343.1" fill="#f23a3a"/>
<polygon points="186.0,941.5 268.6,942.1 266.3,945.7 282.0,937.6 265.7,930.8 268.2,934.2" fill="#f23a3a"/>
</svg>
</body></html>
